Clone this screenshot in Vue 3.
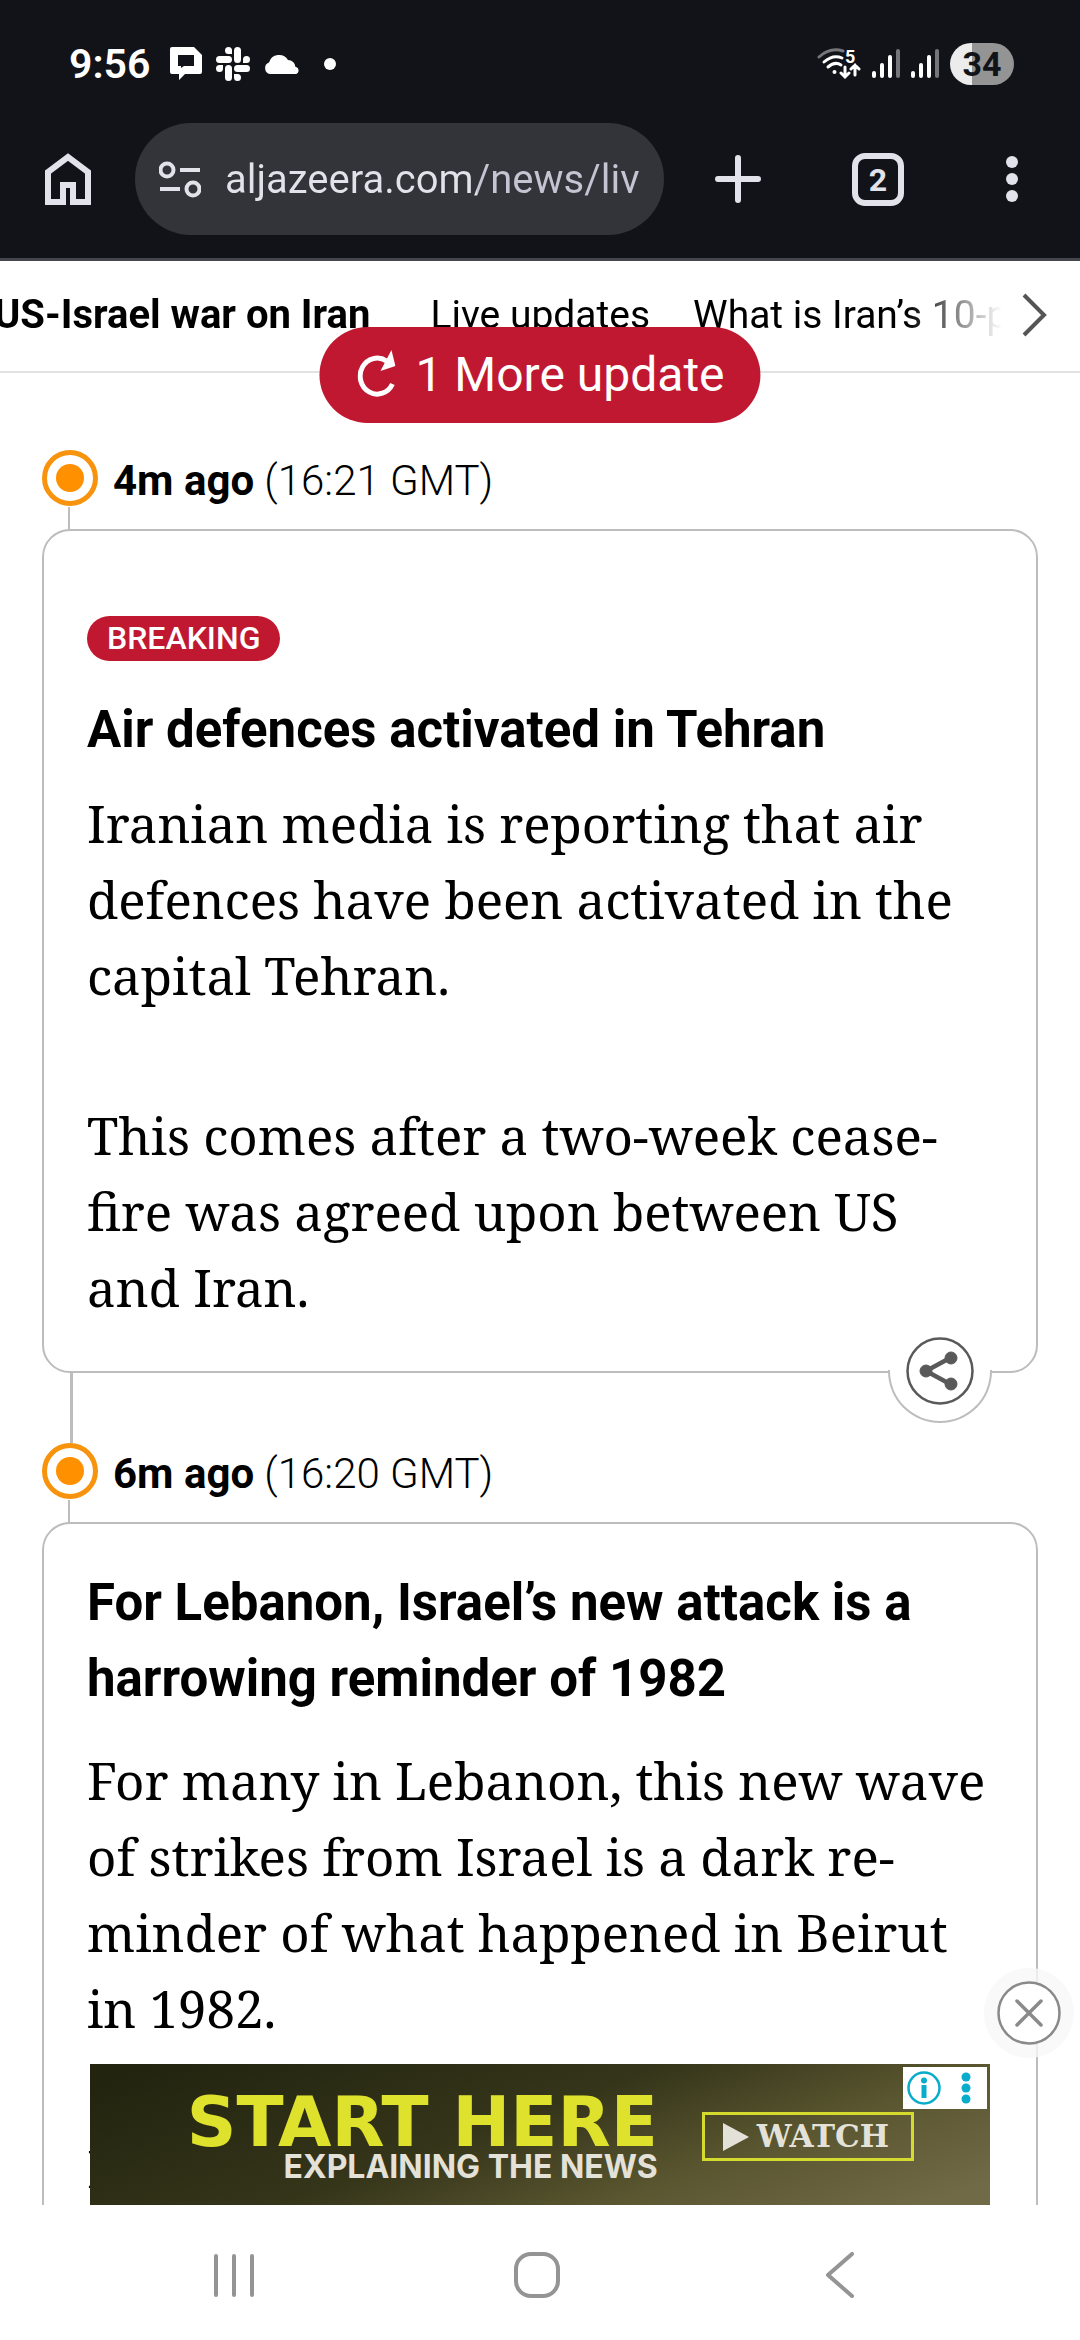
<template>
  <div class="screen">
    <header class="browser">
      <div class="status-bar">
        <span class="clock">9:56</span>
        <div class="notices">
          <svg width="32" height="33" viewBox="0 0 32 33">
            <path fill="#fff" fill-rule="evenodd" d="M2 0h22l8 8v17a2 2 0 0 1-2 2H15l-6 6v-6H2a2 2 0 0 1-2-2V2a2 2 0 0 1 2-2zM8 8v11h3v2l3-2h10V8z" />
          </svg>
          <svg width="34" height="34" viewBox="0 0 34 34" fill="#fff">
            <rect x="18" y="0" width="7" height="16" rx="3.500" />
            <rect x="18" y="18" width="16" height="7" rx="3.500" />
            <rect x="9" y="18" width="7" height="16" rx="3.500" />
            <rect x="0" y="9" width="16" height="7" rx="3.500" />
            <path d="M16 7h-3.500a3.500 3.500 0 1 1 3.500-3.500zM27 16v-3.500a3.500 3.500 0 1 1 3.500 3.500zM18 27h3.500a3.500 3.500 0 1 1-3.500 3.500zM7 18v3.500a3.500 3.500 0 1 1-3.500-3.500z" />
          </svg>
          <svg width="36" height="22" viewBox="0 0 36 22">
            <path fill="#fff" d="M6 21a6 6 0 0 1-1-11.500A10.500 10.500 0 0 1 24 7a7.500 7.500 0 0 1 7.500 7A3.600 3.600 0 0 1 32 21z" />
          </svg>
          <span class="more-dot"></span>
        </div>
        <div class="signals">
          <svg width="44" height="34" viewBox="0 0 44 34" fill="none" stroke="#fff" stroke-width="3" stroke-linecap="round">
            <path stroke="#75767a" d="M2 10Q13 0 26 4" />
            <path d="M7 15q9-8 18-4M11 20q7-6 13-2" />
            <circle cx="17.500" cy="25" r="2" fill="#fff" stroke="none" />
            <path d="M28 20v10m-4-4 4 4 4-4M38 28V18m-4 4 4-4 4 4" />
            <text x="28" y="16" fill="#fff" stroke="none" class="wifi-band">5</text>
          </svg>
          <svg v-for="n in 2" :key="n" width="28" height="31" viewBox="0 0 28 31" stroke-width="4" stroke-linecap="round">
            <path stroke="#fff" d="M2 25v3M10 17v11M18 9v19" />
            <path stroke="#75767a" d="M26 3v25" />
          </svg>
          <span class="battery">34</span>
        </div>
      </div>

      <div class="toolbar">
        <button class="tool home" aria-label="Home">
          <svg width="46" height="52" viewBox="0 0 46 52" fill="none" stroke="#e1e2ea" stroke-width="6">
            <path d="M3 49V19L23 4l20 15v30H28V32H18v17z" />
          </svg>
        </button>
        <div class="address">
          <svg width="42" height="38" viewBox="0 0 42 38" fill="none" stroke="#e1e2ea" stroke-width="4">
            <circle cx="8" cy="10" r="6.500" />
            <circle cx="34" cy="29" r="6.500" />
            <path d="M21 10h20M1 29h20" />
          </svg>
          <input v-model="url" type="text" aria-label="Address" spellcheck="false" />
        </div>
        <button class="tool add" aria-label="New tab">
          <svg width="46" height="48" viewBox="0 0 46 48" stroke="#e1e2ea" stroke-width="6" stroke-linecap="round">
            <path d="M23 3v42M3 24h40" />
          </svg>
        </button>
        <button class="tool" aria-label="Open tabs"><span class="tab-count">2</span></button>
        <button class="tool menu" aria-label="Menu">
          <svg width="12" height="48" viewBox="0 0 12 48" fill="#e1e2ea">
            <circle cx="6" cy="7" r="6" />
            <circle cx="6" cy="24" r="6" />
            <circle cx="6" cy="41" r="6" />
          </svg>
        </button>
      </div>
    </header>

    <main class="page">
      <nav class="topics">
        <div class="topic-list">
          <a href="#" class="current">US-Israel war on Iran</a>
          <a href="#">Live updates</a>
          <a href="#">What is Iran’s 10-point plan?</a>
        </div>
        <button class="next" aria-label="More topics">
          <svg width="26" height="44" viewBox="0 0 26 44" fill="none" stroke="#555" stroke-width="4">
            <path d="M2 2l20 20L2 42" />
          </svg>
        </button>
      </nav>

      <button class="more-updates">
        <svg width="38" height="48" viewBox="0 0 38 48">
          <path fill="none" stroke="#fff" stroke-width="5" d="M35 34A17 18 0 1 1 29 11" />
          <path fill="#fff" d="M34 0l4 16-15 5z" />
        </svg>
        1 More update
      </button>

      <section class="feed">
        <article v-for="post in posts" :key="post.time" class="post">
          <div class="time-row">
            <span class="marker"></span>
            <p class="time"><b>{{ post.age }}</b> ({{ post.time }})</p>
          </div>
          <div class="card" :class="{ breaking: post.breaking }">
            <span v-if="post.breaking" class="badge">BREAKING</span>
            <h2>{{ post.title }}</h2>
            <p v-for="(text, i) in post.body" :key="i">{{ text }}</p>
            <div v-if="post.breaking" class="share-dock">
              <button class="share" aria-label="Share">
                <svg width="68" height="70" viewBox="0 0 68 70" fill="#595959" stroke="#595959">
                  <circle cx="34" cy="35" r="32.500" fill="none" stroke-width="2.500" />
                  <path d="M44 22L20 35l24 13" fill="none" stroke-width="4.500" />
                  <circle cx="45" cy="22" r="6" />
                  <circle cx="20" cy="35" r="6" />
                  <circle cx="45" cy="48" r="6" />
                </svg>
              </button>
            </div>
          </div>
        </article>
      </section>

      <button class="close-ad" aria-label="Close ad">
        <svg width="64" height="64" viewBox="0 0 64 64" fill="#fff" stroke="#8a8a8a">
          <circle cx="32" cy="32" r="30.500" stroke-width="2.500" />
          <path d="M20 20l24 24M44 20L20 44" stroke-width="3.500" stroke-linecap="round" />
        </svg>
      </button>

      <aside class="ad">
        <div class="ad-title">
          <strong>START HERE</strong>
          <span>EXPLAINING THE NEWS</span>
        </div>
        <a href="#" class="watch">
          <svg width="26" height="28" viewBox="0 0 26 28"><path fill="#e4e2d8" d="M0 0l26 14L0 28z" /></svg>
          WATCH
        </a>
        <button class="ad-info" aria-label="Ad options">
          <svg width="34" height="34" viewBox="0 0 34 34" fill="#0aaccb">
            <circle cx="17" cy="17" r="15.500" fill="none" stroke="#0aaccb" stroke-width="2.500" />
            <circle cx="17" cy="9.500" r="3" />
            <path d="M14.500 14h5v13h-5z" />
          </svg>
          <svg width="10" height="34" viewBox="0 0 10 34" fill="#0aaccb">
            <circle cx="5" cy="6" r="4.500" />
            <circle cx="5" cy="17" r="4.500" />
            <circle cx="5" cy="28" r="4.500" />
          </svg>
        </button>
      </aside>
    </main>

    <nav class="system-nav">
      <button aria-label="Recent apps">
        <svg width="46" height="46" viewBox="0 0 46 46" stroke="#949494" stroke-width="4" stroke-linecap="round">
          <path d="M5 4v39M23 4v39M41 4v39" />
        </svg>
      </button>
      <button aria-label="Home screen">
        <svg width="48" height="48" viewBox="0 0 48 48" fill="none" stroke="#949494" stroke-width="4">
          <rect x="3" y="3" width="42" height="42" rx="15" />
        </svg>
      </button>
      <button aria-label="Back">
        <svg width="30" height="46" viewBox="0 0 30 46" fill="none" stroke="#949494" stroke-width="4" stroke-linecap="round" stroke-linejoin="round">
          <path d="M27 2L3 23l24 21" />
        </svg>
      </button>
    </nav>
  </div>
</template>

<script setup>
import { ref } from "vue";

const url = ref("aljazeera.com/news/liv");

// \u00AD marks where long words may hyphenate
const posts = ref([
  {
    age: "4m ago",
    time: "16:21 GMT",
    breaking: true,
    title: "Air defences activated in Tehran",
    body: [
      "Iranian media is reporting that air defences have been activated in the capital Tehran.",
      "This comes after a two-week cease\u00ADfire was agreed upon between US and Iran.",
    ],
  },
  {
    age: "6m ago",
    time: "16:20 GMT",
    breaking: false,
    title: "For Lebanon, Israel’s new attack is a harrowing reminder of 1982",
    body: [
      "For many in Lebanon, this new wave of strikes from Israel is a dark re\u00ADminder of what happened in Beirut in 1982.",
      "I",
    ],
  },
]);
</script>

<style>
body {
  background-color: #fff;
}
</style>

<style scoped>
.screen {
  height: 100vh;
  display: flex;
  flex-direction: column;
  font-family: Roboto, sans-serif;
  color: #000;
}

button {
  border: none;
  padding: 0;
  background: none;
  font-family: inherit;
  cursor: pointer;
}

svg {
  display: block;
  flex-shrink: 0;
}

/* browser header */
.browser {
  background-color: #121318;
  border-bottom: 3px solid #46464f;
}

.status-bar {
  display: flex;
  align-items: center;
  height: 83px;
  padding: 22px 66px 18px 69px;
}

.clock {
  color: #fff;
  font-size: 41px;
  font-weight: 600;
}

.notices {
  display: flex;
  align-items: center;
  gap: 14px;
  margin-left: 20px;
}

.more-dot {
  width: 12px;
  height: 12px;
  margin-left: 10px;
  border-radius: 50%;
  background-color: #fff;
}

.signals {
  display: flex;
  align-items: center;
  gap: 11px;
  margin-left: auto;
}

.wifi-band {
  font-size: 18px;
  font-weight: 700;
}

.battery {
  width: 64px;
  height: 42px;
  border-radius: 21px;
  background: linear-gradient(to right, #ececec 34%, #949494 34%);
  color: #121318;
  font-size: 34px;
  font-weight: 700;
  line-height: 43px;
  text-align: center;
}

.toolbar {
  display: flex;
  align-items: center;
  padding-bottom: 23px;
}

.tool {
  display: flex;
  align-items: center;
  justify-content: center;
  width: 132px;
}

.tool.home {
  width: 135px;
}

.tool.add {
  width: 148px;
}

.tool.menu {
  width: 136px;
}

.address {
  flex: 1;
  min-width: 0;
  height: 112px;
  display: flex;
  align-items: center;
  gap: 24px;
  padding: 0 20px 0 24px;
  border-radius: 56px;
  background-color: #33343a;
}

.address input {
  flex: 1;
  min-width: 0;
  padding: 2px 0 0;
  border: none;
  outline: none;
  font-family: inherit;
  font-size: 40px;
  line-height: 56px;
  color: transparent;
  /* host is brighter than the path */
  background: linear-gradient(to right, #e1e2ea 252px, #c4c5d2 252px);
  background-clip: text;
}

.tab-count {
  width: 40px;
  height: 41px;
  border: 6px solid #e1e2ea;
  border-radius: 13px;
  color: #e1e2ea;
  font-size: 32px;
  font-weight: 700;
  line-height: 42px;
}

/* page */
.page {
  flex: 1;
  min-height: 0;
  position: relative;
  overflow: hidden;
}

.topics {
  display: flex;
  align-items: center;
  height: 107px;
  padding-bottom: 3px;
  border-bottom: 2px solid #e2e2e2;
}

.topic-list {
  flex: 1;
  min-width: 0;
  display: flex;
  align-items: center;
  gap: 43px;
  margin-left: -6px;
  overflow: hidden;
  white-space: nowrap;
  -webkit-mask-image: linear-gradient(to right, #000 calc(100% - 96px), transparent);
  mask-image: linear-gradient(to right, #000 calc(100% - 96px), transparent);
}

.topic-list a {
  color: #000;
  font-size: 39px;
  line-height: 50px;
  text-decoration: none;
}

.topic-list .current {
  margin-right: 17px;
  font-size: 40px;
  font-weight: 700;
}

.next {
  padding: 0 32px 0 20px;
}

.more-updates {
  position: absolute;
  top: 66px;
  left: 50%;
  transform: translateX(-50%);
  display: flex;
  align-items: center;
  gap: 20px;
  height: 96px;
  padding: 0 36px 2px 38px;
  border-radius: 48px;
  background-color: #c11831;
  color: #fff;
  font-size: 48px;
  white-space: nowrap;
}

.feed {
  padding: 77px 42px 0;
}

.post {
  margin-bottom: 70px;
}

.time-row {
  position: relative;
  display: flex;
  align-items: center;
  gap: 15px;
  height: 56px;
  margin-bottom: 23px;
}

.marker {
  width: 56px;
  height: 56px;
  padding: 9px;
  border: 5px solid #f7930d;
  border-radius: 50%;
  background-color: #ff9000;
  background-clip: content-box;
  box-sizing: border-box;
}

.time-row::after {
  content: "";
  position: absolute;
  top: 57px;
  left: 26px;
  width: 2px;
  height: 24px;
  background-color: #bdbdbd;
}

.post + .post .time-row::before {
  content: "";
  position: absolute;
  bottom: 56px;
  left: 28px;
  width: 3px;
  height: 70px;
  background-color: #bdbdbd;
}

.time {
  margin: 0;
  padding-top: 4px;
  font-size: 42px;
  font-weight: 300;
}

.time b {
  font-weight: 700;
}

.card {
  position: relative;
  padding: 41px 42px 46px 43px;
  border: 2px solid #bdbdbd;
  border-radius: 28px;
}

.card.breaking {
  padding-top: 85px;
}

.badge {
  display: block;
  width: fit-content;
  margin-bottom: 31px;
  padding: 0 20px;
  border-radius: 23px;
  background-color: #c11831;
  color: #fff;
  font-size: 32px;
  font-weight: 500;
  line-height: 45px;
}

.card h2 {
  margin: 0 0 25px;
  font-size: 51px;
  font-weight: 700;
  line-height: 76px;
}

.card.breaking h2 {
  margin-bottom: 17px;
}

.card p {
  margin: 0;
  font-family: "Noto Serif", "Liberation Serif", serif;
  font-size: 51px;
  line-height: 76px;
}

.card p + p {
  margin-top: 84px;
}

/* half circle hanging from the card edge */
.share-dock {
  position: absolute;
  right: 44px;
  bottom: -52px;
  display: flex;
  justify-content: center;
  width: 100px;
  height: 51px;
  border: 2px solid #bdbdbd;
  border-top: none;
  border-radius: 0 0 52px 52px;
  background-color: #fff;
}

.share {
  height: 70px;
  margin-top: -34px;
}

/* bottom ad */
.close-ad {
  position: absolute;
  right: 6px;
  bottom: 147px;
  display: flex;
  align-items: center;
  justify-content: center;
  width: 90px;
  height: 90px;
  border-radius: 50%;
  background-color: rgba(247, 247, 247, 0.8);
}

.ad {
  position: absolute;
  right: 90px;
  bottom: 0;
  left: 90px;
  display: flex;
  align-items: center;
  justify-content: flex-end;
  gap: 44px;
  height: 141px;
  padding: 4px 76px 0 0;
  box-sizing: border-box;
  background: linear-gradient(160deg, #22240f 5%, #35351a 45%, #5a5630 70%, #706a46 95%);
}

.ad-title {
  display: flex;
  flex-direction: column;
  align-items: flex-end;
  font-family: Inter, sans-serif;
}

.ad-title strong {
  color: #dfe22c;
  font-family: "DejaVu Sans", sans-serif;
  font-size: 69px;
  font-weight: 700;
  line-height: 60px;
}

.ad-title span {
  color: #e4e2d8;
  font-size: 32px;
  font-weight: 700;
  line-height: 30px;
}

.watch {
  display: flex;
  align-items: center;
  gap: 8px;
  padding: 0 22px 0 18px;
  border: 3px solid #d5da2f;
  color: #e4e2d8;
  font-family: "DejaVu Serif", serif;
  font-size: 31px;
  font-weight: 700;
  line-height: 43px;
  text-decoration: none;
}

.ad-info {
  position: absolute;
  top: 3px;
  right: 3px;
  display: flex;
  align-items: center;
  gap: 20px;
  padding: 4px 16px 4px 4px;
  background-color: #fff;
}

/* system navigation */
.system-nav {
  display: grid;
  grid-template-columns: repeat(3, 1fr);
  height: 130px;
  padding: 5px 89px 0 83px;
  background-color: #fff;
}

.system-nav button {
  display: flex;
  align-items: center;
  justify-content: center;
}
</style>
